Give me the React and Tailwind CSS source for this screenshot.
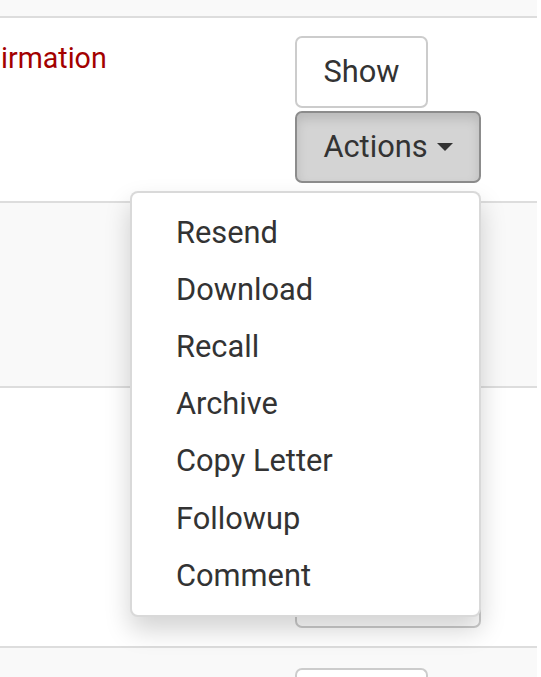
import { useState } from 'react';

const menuItems = ['Resend', 'Download', 'Recall', 'Archive', 'Copy Letter', 'Followup', 'Comment'];

function Caret() {
  return <span className="ml-[9px] inline-block h-0 w-0 border-x-[8.8px] border-t-[8.8px] border-x-transparent border-t-[#333]" />;
}

function Btn({ children, w = 'w-[133px]', active = false }) {
  return (
    <button
      type="button"
      className={
        'flex h-[72px] items-center justify-center rounded-[7px] border-2 text-[30.8px] leading-[44px] text-[#333] ' +
        w +
        (active ? ' border-[#8c8c8c] bg-[#d4d4d4] shadow-[inset_0_6px_11px_rgba(0,0,0,0.125)]' : ' border-[#ccc] bg-white')
      }
    >
      {children}
    </button>
  );
}

function ActionsMenu({ open }) {
  return (
    <div className="relative">
      <Btn w="w-[186px]" active={open}>
        Actions
        <Caret />
      </Btn>
      {open && (
        <ul className="absolute right-0 top-[calc(100%+8px)] z-10 w-[351px] rounded-[8px] border-2 border-[rgba(0,0,0,0.15)] bg-white py-[11px] shadow-[0_13px_26px_rgba(0,0,0,0.175)]">
          {menuItems.map((m) => (
            <li key={m} className="px-[44px] py-[6.6px] text-[30.8px] leading-[44px] text-[#333]">
              {m}
            </li>
          ))}
        </ul>
      )}
    </div>
  );
}

function Row({ striped, label, extra, open }) {
  return (
    <div className={'flex border-t-2 border-[#ddd] py-[18px] ' + (striped ? 'bg-[#f9f9f9]' : 'bg-white')}>
      <div className="flex-1 pl-[1px] text-[28.6px] leading-[44px] text-[#a30000]">{label}</div>
      <div className="flex w-[260px] flex-col items-start gap-[3px] pl-[18px]">
        <Btn>Show</Btn>
        {extra && <Btn>Edit</Btn>}
        <ActionsMenu open={open} />
      </div>
    </div>
  );
}

export default function App() {
  const [open] = useState(true);
  return (
    <div className="h-[677px] w-[541px] overflow-hidden bg-white font-['Roboto',sans-serif]">
      <div className="w-[537px]">
        <div className="h-[16px] bg-[#f9f9f9]" />
        <Row label="irmation" open={open} />
        <Row striped />
        <Row extra />
        {/* next row only peeks in at the bottom edge */}
        <div className="flex border-t-2 border-[#ddd] bg-[#f9f9f9] pt-[20px]">
          <div className="flex-1" />
          <div className="w-[260px] pl-[18px]">
            <div className="h-[40px] w-[133px] rounded-t-[7px] border-2 border-b-0 border-[#ccc] bg-white" />
          </div>
        </div>
      </div>
    </div>
  );
}
